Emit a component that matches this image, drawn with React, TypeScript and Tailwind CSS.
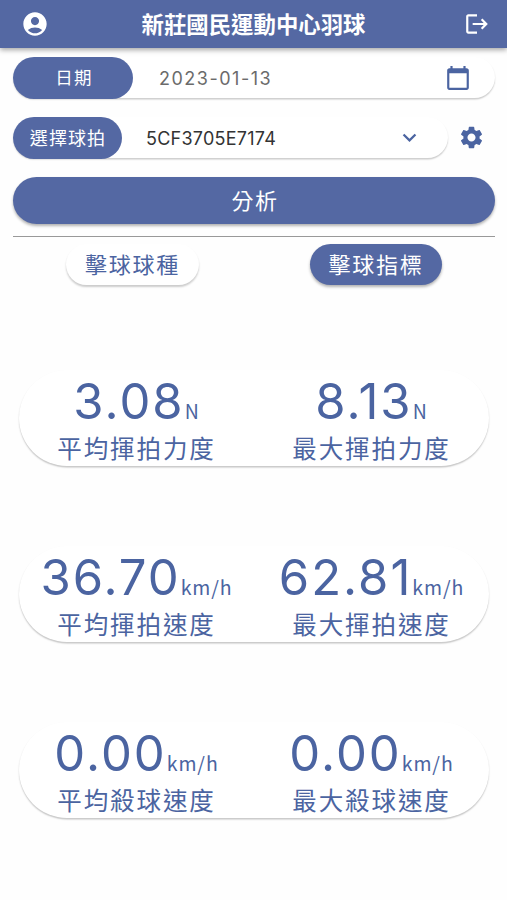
import { MdAccountCircle, MdKeyboardArrowDown, MdLogout, MdSettings } from "react-icons/md";

type Metric = {
  value: string;
  unit: string;
  label: string;
};

const metrics: Metric[][] = [
  [
    { value: "3.08", unit: "N", label: "平均揮拍力度" },
    { value: "8.13", unit: "N", label: "最大揮拍力度" },
  ],
  [
    { value: "36.70", unit: "km/h", label: "平均揮拍速度" },
    { value: "62.81", unit: "km/h", label: "最大揮拍速度" },
  ],
  [
    { value: "0.00", unit: "km/h", label: "平均殺球速度" },
    { value: "0.00", unit: "km/h", label: "最大殺球速度" },
  ],
];

function CalendarIcon() {
  return (
    <svg viewBox="0 0 24 24" fill="currentColor" className="mr-6 ml-auto size-[26px]">
      <path d="M20 3h-1V1h-2v2H7V1H5v2H4c-1.1 0-2 .9-2 2v16c0 1.1.9 2 2 2h16c1.1 0 2-.9 2-2V5c0-1.1-.9-2-2-2zm0 18H4V7.5h16V21z" />
    </svg>
  );
}

function MetricCell({ value, unit, label }: Metric) {
  return (
    <div className="flex flex-col items-center whitespace-nowrap">
      <div className="flex h-[63px] items-baseline leading-[64px]">
        <span className="text-[49px] tracking-[2px]">{value}</span>
        <span className="font-['Noto_Sans_CJK_TC',sans-serif] text-[19.5px] leading-8 tracking-[0.9px]">
          {unit}
        </span>
      </div>
      <div className="text-[24.5px] leading-[33px] tracking-[1.9px]">{label}</div>
    </div>
  );
}

export default function App() {
  return (
    <main className="flex h-[900px] w-[507px] flex-col overflow-hidden bg-[#fefefe] font-['Inter','Noto_Sans_CJK_TC',sans-serif] text-[#4b64a1]">
      {/* Header */}
      <header className="flex h-12 shrink-0 items-center justify-between bg-[#5468a3] pr-[17px] pl-[21px] text-white shadow-[0_2px_5px_rgba(0,0,0,0.35)]">
        <MdAccountCircle size={28} />
        <h1 className="pt-[2px] pr-[6px] text-[22.4px] leading-8 font-bold">新莊國民運動中心羽球</h1>
        <MdLogout size={26} />
      </header>

      {/* Filters */}
      <section className="flex flex-col pt-[9px] pr-3 pl-[13px]">
        <div className="flex h-[41px] w-[482px] items-center rounded-full bg-white shadow-[0_1.5px_1.5px_rgba(0,0,0,0.2)]">
          <div className="flex h-[42px] w-[120px] items-center justify-center rounded-full bg-[#5468a3] pt-px pl-[2px] text-[17.5px] tracking-[1.3px] text-white">
            日期
          </div>
          <span className="ml-[26px] pt-px text-[18px] tracking-[1.5px] text-[#6b6b6b]">2023-01-13</span>
          <CalendarIcon />
        </div>

        <div className="mt-[19px] flex items-center">
          <div className="flex h-[41px] w-[435px] items-center rounded-full bg-white shadow-[0_1.5px_1.5px_rgba(0,0,0,0.2)]">
            <div className="flex h-[42px] w-[109px] items-center justify-center rounded-full bg-[#5468a3] pt-px pl-px text-[18px] tracking-[1.1px] text-white">
              選擇球拍
            </div>
            <span className="ml-6 pt-px text-[18px] tracking-[0.25px] text-[#333]">5CF3705E7174</span>
            <MdKeyboardArrowDown size={27} className="mr-[25px] ml-auto" />
          </div>
          <MdSettings size={27} className="ml-[10px]" />
        </div>

        <button className="mt-[19px] h-[47px] rounded-full bg-[#5468a3] pt-[2px] pl-[2px] text-[22px] tracking-[1.5px] text-white shadow-[0_2px_3px_rgba(0,0,0,0.3)]">
          分析
        </button>
        <hr className="mt-3 border-t border-[#999]" />
      </section>

      {/* Tabs */}
      <nav className="mt-[7px] grid grid-cols-2 pr-[13px] pl-[12px] text-[22px] tracking-[1.7px]">
        <button className="ml-[54px] h-[41px] w-[133px] rounded-full bg-white pt-px shadow-[0_2px_2px_rgba(0,0,0,0.2)]">
          擊球球種
        </button>
        <button className="ml-[57px] h-[41px] w-[132px] rounded-full bg-[#5468a3] pt-px text-white shadow-[0_2px_3px_rgba(0,0,0,0.3)]">
          擊球指標
        </button>
      </nav>

      {/* Metrics */}
      <section className="mt-[85px] flex flex-col gap-20 pr-[18px] pl-[19px]">
        {metrics.map((row) => (
          <div
            key={row[0].label}
            className="grid h-24 grid-cols-2 rounded-[48px] bg-white shadow-[0_1.5px_1.5px_rgba(0,0,0,0.22)]"
          >
            {row.map((metric) => (
              <MetricCell key={metric.label} {...metric} />
            ))}
          </div>
        ))}
      </section>
    </main>
  );
}
